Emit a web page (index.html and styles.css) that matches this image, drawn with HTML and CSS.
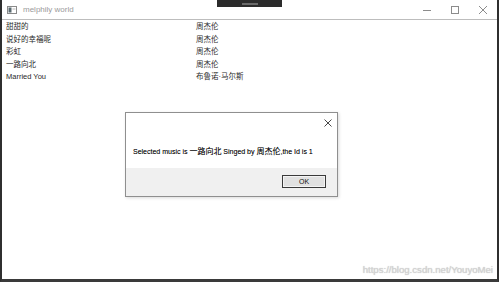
FILE: index.html
```html
<!DOCTYPE html>
<html>
<head>
<meta charset="utf-8">
<link rel="stylesheet" href="styles.css">
</head>
<body>
<div class="window">
  <div class="snap-tab"><span class="snap-bar"></span></div>
  <div class="titlebar">
    <div class="title-left">
      <svg class="app-icon" width="10" height="8" viewBox="0 0 10 8">
        <rect x="0.5" y="0.5" width="9" height="7" fill="#fff" stroke="#8a8a8a"/>
        <rect x="1.5" y="1.5" width="3" height="5" fill="#5a6a70"/>
        <rect x="5.5" y="2.5" width="3" height="1" fill="#b8b8b8"/>
      </svg>
      <span class="title">melphily world</span>
    </div>
    <div class="controls">
      <svg class="ctl" width="28" height="14" viewBox="0 0 28 14"><line x1="10" y1="7.5" x2="18" y2="7.5" stroke="#8c8c8c" stroke-width="1"/></svg>
      <svg class="ctl" width="28" height="14" viewBox="0 0 28 14"><rect x="10.5" y="3.5" width="7" height="7" fill="none" stroke="#8c8c8c" stroke-width="1"/></svg>
      <svg class="ctl" width="28" height="14" viewBox="0 0 28 14"><path d="M10 3 L18 11 M18 3 L10 11" stroke="#8c8c8c" stroke-width="1"/></svg>
    </div>
  </div>
  <div class="list">
    <div class="row"><span>甜甜的</span><span>周杰伦</span></div>
    <div class="row"><span>说好的幸福呢</span><span>周杰伦</span></div>
    <div class="row"><span>彩虹</span><span>周杰伦</span></div>
    <div class="row"><span>一路向北</span><span>周杰伦</span></div>
    <div class="row"><span>Married You</span><span>布鲁诺·马尔斯</span></div>
  </div>
  <div class="dialog">
    <div class="dlg-body">
      <div class="dlg-head">
        <svg width="10" height="10" viewBox="0 0 10 10"><path d="M1.5 1.5 L8.5 8.5 M8.5 1.5 L1.5 8.5" stroke="#333" stroke-width="0.9"/></svg>
      </div>
      <div class="msg">Selected music is <span class="cjk">一路向北</span> Singed by <span class="cjk">周杰伦</span>,the Id is 1</div>
    </div>
    <div class="dlg-foot">
      <div class="ok-btn"><span>OK</span></div>
    </div>
  </div>
  <div class="watermark">https://blog.csdn.net/YouyoMei</div>
</div>
</body>
</html>
```
FILE: styles.css
```css
html, body {
  margin: 0;
  padding: 0;
  background: #ffffff;
}
body {
  font-family: "Liberation Sans", "Noto Sans CJK SC", sans-serif;
  width: 499px;
  height: 282px;
  overflow: hidden;
}
.window {
  position: relative;
  box-sizing: border-box;
  width: 499px;
  height: 282px;
  border-left: 2px solid #2f2f2f;
  border-right: 2px solid #2f2f2f;
  border-bottom: 3px solid #3a3a3a;
  background: #fff;
  display: flex;
  flex-direction: column;
}
.snap-tab {
  position: absolute;
  left: 215px;
  top: 0;
  width: 65px;
  height: 7px;
  background: #2b2b2b;
  display: flex;
  justify-content: center;
  align-items: flex-start;
}
.snap-bar {
  margin-top: 3px;
  width: 16px;
  height: 2px;
  background: #6a6a6a;
}
.titlebar {
  height: 20px;
  box-sizing: border-box;
  border-bottom: 1px solid #bdbdbd;
  display: flex;
  justify-content: space-between;
  align-items: center;
}
.title-left {
  display: flex;
  align-items: center;
  padding-left: 5px;
  gap: 6px;
}
.app-icon {
  display: block;
}
.title {
  font-size: 8px;
  color: #9a9a9a;
  line-height: 10px;
}
.controls {
  display: flex;
  align-items: center;
}
.ctl {
  display: block;
}
.list {
  padding: 1px 0 0 4px;
  font-size: 7.5px;
  color: #2a2a2a;
}
.row {
  display: grid;
  grid-template-columns: 190px auto;
  height: 12.5px;
  line-height: 12.5px;
}
.dialog {
  position: absolute;
  left: 123px;
  top: 112px;
  width: 213px;
  height: 85px;
  box-sizing: border-box;
  border: 1px solid #8f8f8f;
  background: #fff;
  box-shadow: 1px 1px 3px rgba(0,0,0,0.15);
  display: flex;
  flex-direction: column;
}
.dlg-body {
  height: 55px;
  padding: 0 4px 0 7px;
}
.dlg-head {
  height: 20px;
  display: flex;
  justify-content: flex-end;
  align-items: center;
}
.dlg-head svg {
  display: block;
}
.msg {
  margin-top: 14px;
  font-size: 7px;
  line-height: 10px;
  color: #000;
  white-space: nowrap;
  text-shadow: 0.2px 0 0 rgba(0,0,0,0.35);
}
.cjk {
  font-size: 8px;
}
.dlg-foot {
  flex: 1;
  background: #f0f0f0;
  display: flex;
  justify-content: flex-end;
  align-items: flex-start;
  padding: 7px 11px 0 0;
}
.ok-btn {
  width: 44px;
  height: 13px;
  box-sizing: border-box;
  border: 1px solid #3a3a3a;
  background: #e1e1e1;
  display: flex;
  align-items: center;
  justify-content: center;
  box-shadow: inset 0 0 0 1px #f4f4f4;
}
.ok-btn span {
  font-size: 7px;
  color: #111;
  line-height: 10px;
}
.watermark {
  position: absolute;
  right: 4px;
  bottom: 4px;
  font-size: 9.6px;
  color: #d4d4d4;
  text-shadow: 0 0 1px #bbb;
}
```
